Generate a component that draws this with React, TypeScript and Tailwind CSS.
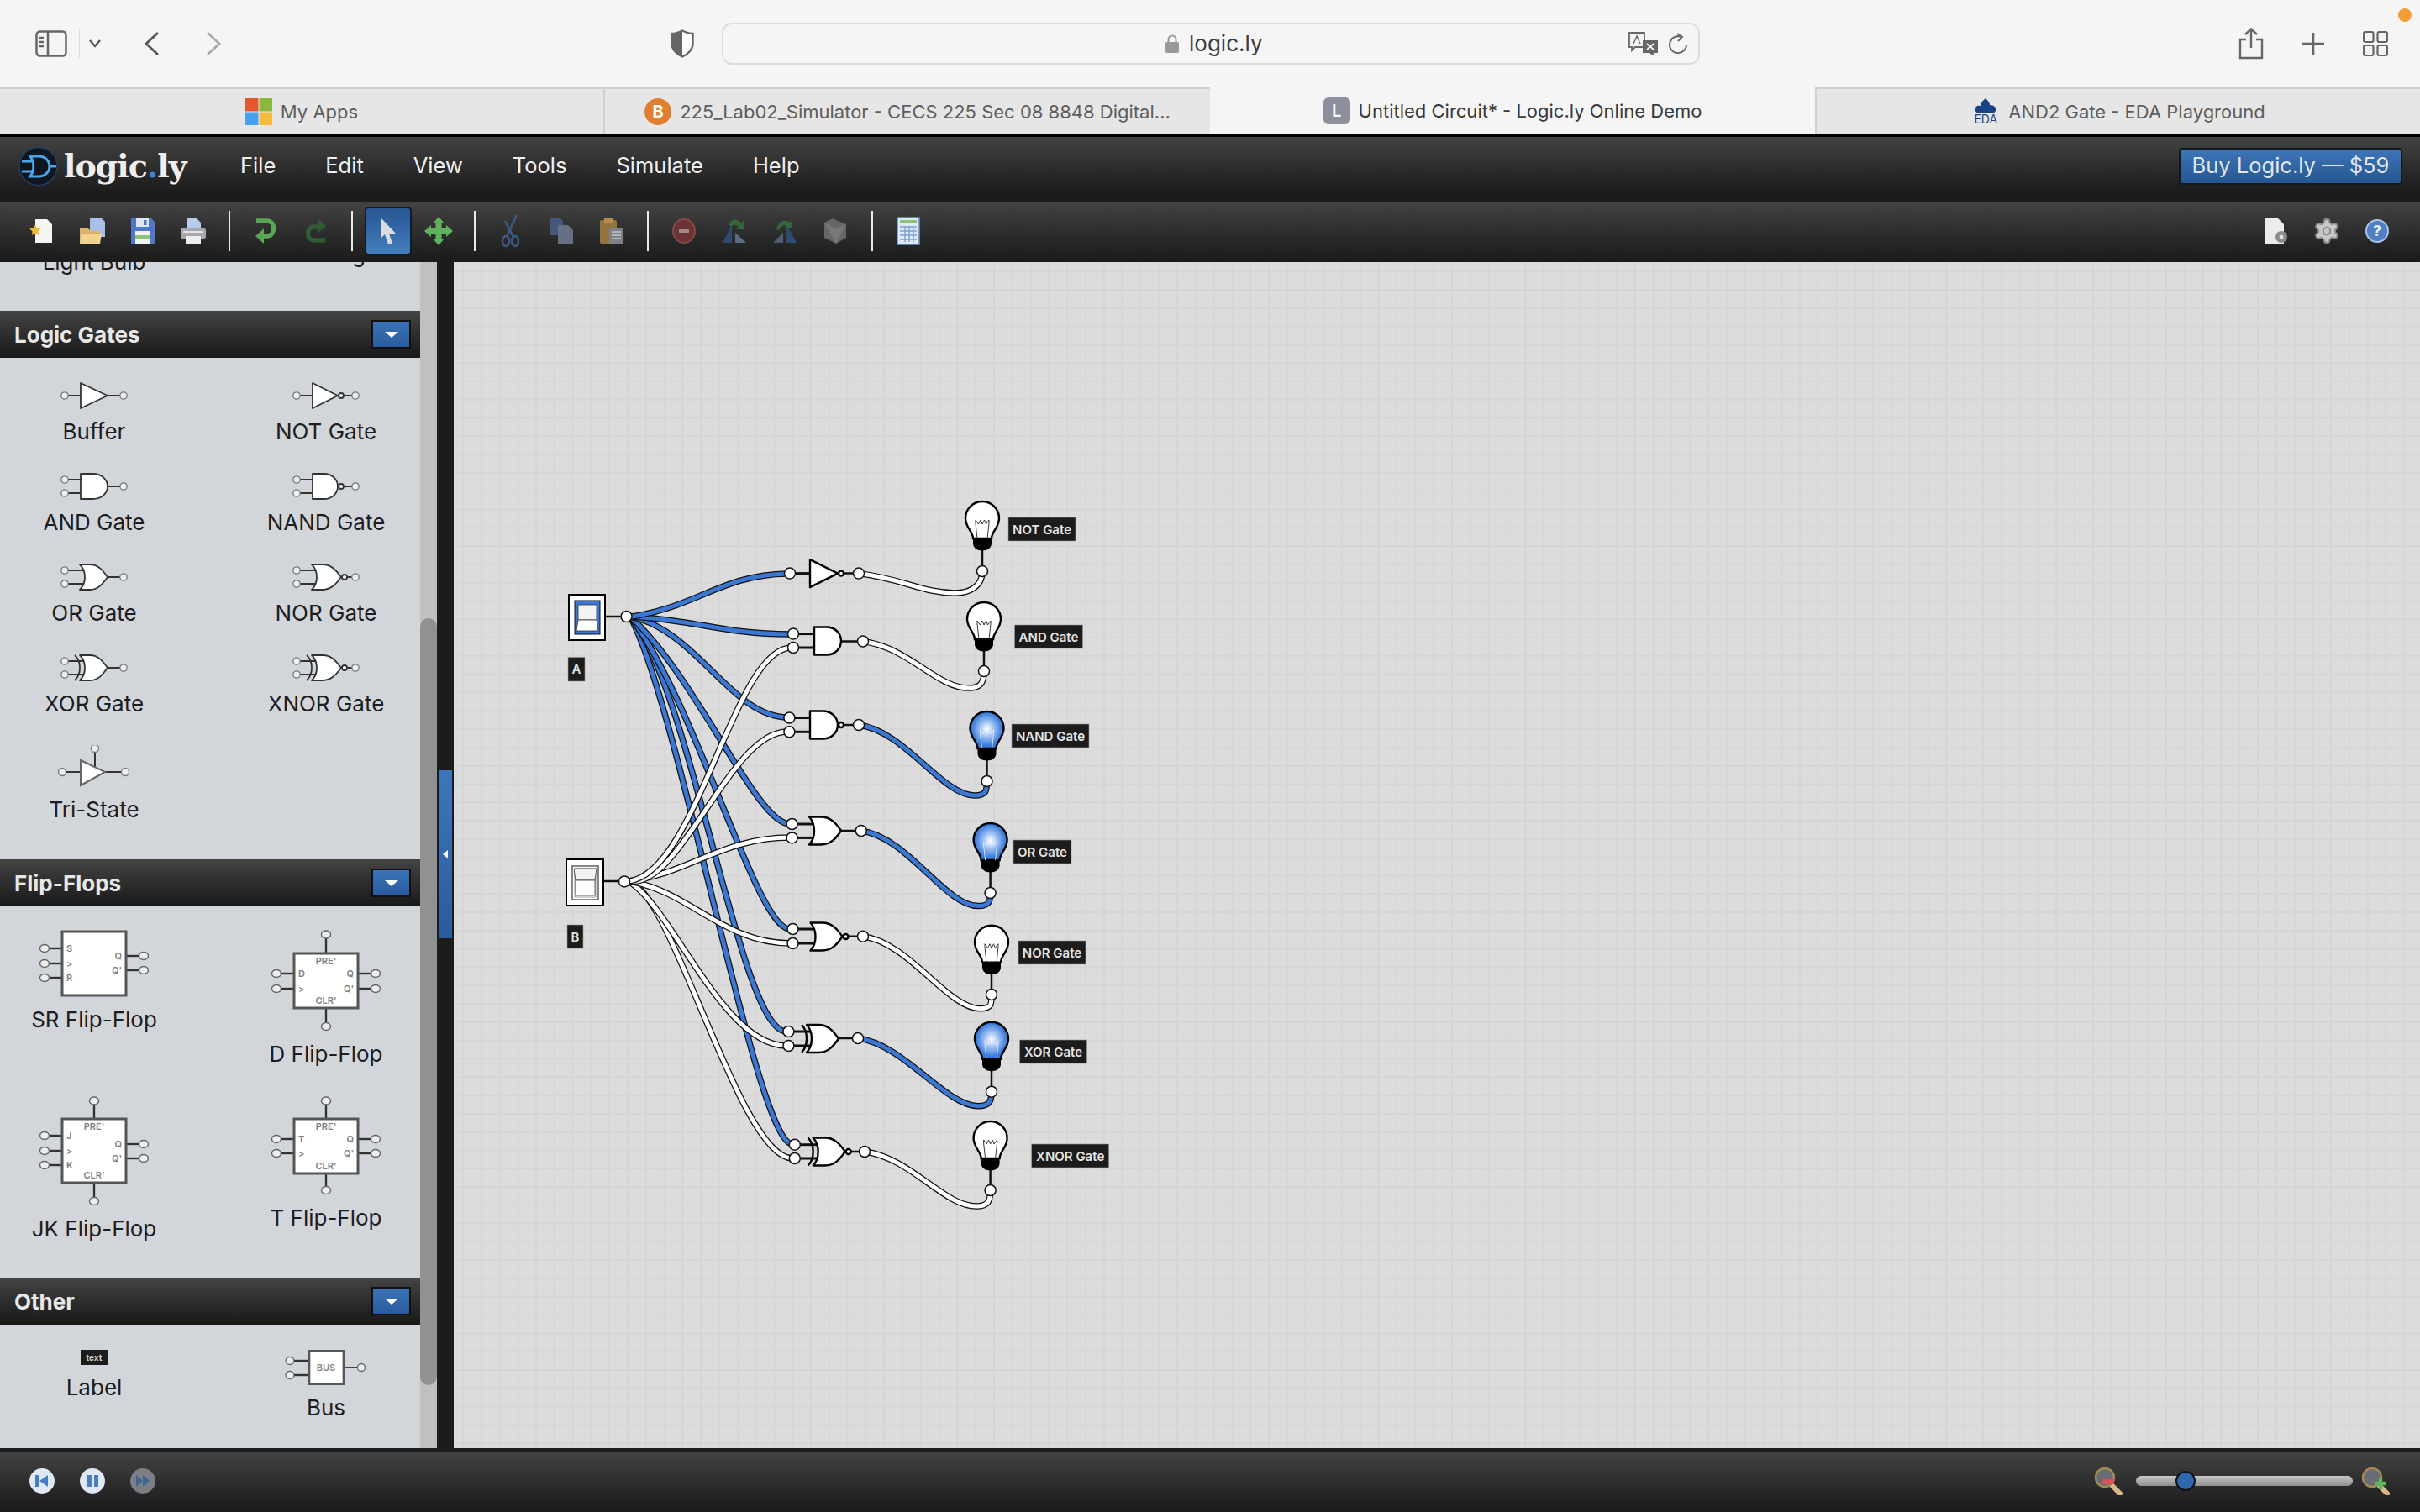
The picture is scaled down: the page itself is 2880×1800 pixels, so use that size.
import { Settings } from "lucide-react";
import type { ReactNode } from "react";

type Kind = "buf" | "not" | "and" | "nand" | "or" | "nor" | "xor" | "xnor";

const gridBg =
  "bg-[#dcdcdc] bg-[image:linear-gradient(#d5d5d5_2px,transparent_2px),linear-gradient(90deg,#d5d5d5_2px,transparent_2px)] bg-[size:21.8px_21.8px] bg-[position:-535px_-295px]";

function GateBody({ kind, x, cy, w, h, stroke, sw }: { kind: Kind; x: number; cy: number; w: number; h: number; stroke: string; sw: number }) {
  const top = cy - h / 2;
  const bot = cy + h / 2;
  const negated = kind === "not" || kind === "nand" || kind === "nor" || kind === "xnor";
  let d = "";
  let tip = x + w;
  if (kind === "buf" || kind === "not") {
    d = `M${x} ${top} L${x + w} ${cy} L${x} ${bot} Z`;
  } else if (kind === "and" || kind === "nand") {
    d = `M${x} ${top} H${x + w * 0.45} C${x + w * 0.8} ${top} ${x + w} ${cy - h * 0.25} ${x + w} ${cy} C${x + w} ${cy + h * 0.25} ${x + w * 0.8} ${bot} ${x + w * 0.45} ${bot} H${x} Z`;
  } else {
    tip = x + w + 4;
    d = `M${x - 1} ${top} H${x + w * 0.4} C${x + w * 0.75} ${top} ${x + w * 0.95} ${cy - h * 0.25} ${tip} ${cy} C${x + w * 0.95} ${cy + h * 0.25} ${x + w * 0.75} ${bot} ${x + w * 0.4} ${bot} H${x - 1} C${x + 7} ${cy + h * 0.25} ${x + 7} ${cy - h * 0.25} ${x - 1} ${top} Z`;
  }
  return (
    <g>
      {(kind === "xor" || kind === "xnor") && (
        <path d={`M${x - 7} ${top} C${x + 1} ${cy - h * 0.25} ${x + 1} ${cy + h * 0.25} ${x - 7} ${bot}`} fill="none" stroke={stroke} strokeWidth={sw} />
      )}
      <path d={d} fill="#fff" stroke={stroke} strokeWidth={sw} strokeLinejoin="round" />
      {negated && <circle cx={tip + 4} cy={cy} r={3} fill="#fff" stroke={stroke} strokeWidth={sw} />}
    </g>
  );
}

function SmallGate({ kind }: { kind: Kind }) {
  const single = kind === "buf" || kind === "not";
  const negated = kind === "not" || kind === "nand" || kind === "nor" || kind === "xnor";
  const isOr = kind === "or" || kind === "nor" || kind === "xor" || kind === "xnor";
  const w = negated ? 30 : isOr ? 28 : 32;
  return (
    <svg width="80" height="32" viewBox="-40 -16 80 32" className="shrink-0">
      <line x1={-31} x2={-12} y1={single ? 0 : -8} y2={single ? 0 : -8} stroke="#333" strokeWidth="2" />
      {!single && <line x1={-31} x2={-12} y1={8} y2={8} stroke="#333" strokeWidth="2" />}
      <line x1={0} x2={31} y1={0} y2={0} stroke="#333" strokeWidth="2" />
      <GateBody kind={kind} x={-16} cy={0} w={w} h={30} stroke="#333" sw={1.8} />
      <circle cx={-35} cy={single ? 0 : -8} r={4.2} fill="#eee" stroke="#777" strokeWidth="1.3" />
      {!single && <circle cx={-35} cy={8} r={4.2} fill="#eee" stroke="#777" strokeWidth="1.3" />}
      <circle cx={35} cy={0} r={4.2} fill="#eee" stroke="#777" strokeWidth="1.3" />
    </svg>
  );
}

function TriState() {
  return (
    <svg width="90" height="50" viewBox="-45 -4 90 50" className="shrink-0">
      <line x1={1} x2={1} y1={4} y2={22} stroke="#333" strokeWidth="2" />
      <line x1={-33} x2={36} y1={28} y2={28} stroke="#333" strokeWidth="2" />
      <path d="M-16 14 L13 28 L-16 44 Z" fill="#fff" stroke="#666" strokeWidth="2" />
      <circle cx={1} cy={0} r={4.5} fill="#eee" stroke="#777" strokeWidth="1.3" />
      <circle cx={-38} cy={28} r={4.5} fill="#eee" stroke="#777" strokeWidth="1.3" />
      <circle cx={37} cy={28} r={4.5} fill="#eee" stroke="#777" strokeWidth="1.3" />
    </svg>
  );
}

function FlipFlop(p: { h: number; by: number; bh: number; ins: [number, string][]; outs: [number, string][]; pre?: boolean }) {
  const small = { fontFamily: "Inter, sans-serif", fontSize: 11, fontWeight: 600, fill: "#808080" };
  return (
    <svg width="130" height={p.h} viewBox={`-65 0 130 ${p.h}`} className="shrink-0">
      {p.ins.map(([y]) => (
        <g key={y}>
          <line x1={-56} x2={-38} y1={y} y2={y} stroke="#333" strokeWidth="2.4" />
          <ellipse cx={-59} cy={y} rx={5.5} ry={4.5} fill="#eee" stroke="#666" strokeWidth="1.4" />
        </g>
      ))}
      {p.outs.map(([y]) => (
        <g key={y}>
          <line x1={38} x2={56} y1={y} y2={y} stroke="#333" strokeWidth="2.4" />
          <ellipse cx={59} cy={y} rx={5.5} ry={4.5} fill="#eee" stroke="#666" strokeWidth="1.4" />
        </g>
      ))}
      {p.pre && (
        <g>
          <line x1={0} x2={0} y1={10} y2={p.by} stroke="#333" strokeWidth="2.4" />
          <line x1={0} x2={0} y1={p.by + p.bh} y2={p.h - 10} stroke="#333" strokeWidth="2.4" />
          <ellipse cx={0} cy={6.5} rx={5.5} ry={4.5} fill="#eee" stroke="#666" strokeWidth="1.4" />
          <ellipse cx={0} cy={p.h - 6} rx={5.5} ry={4.5} fill="#eee" stroke="#666" strokeWidth="1.4" />
        </g>
      )}
      <rect x={-38} y={p.by} width={76} height={p.bh} fill="#fff" stroke="#555" strokeWidth="3" />
      {p.ins.map(([y, t]) => (
        <text key={y} x={-33} y={y + 4} {...small}>{t}</text>
      ))}
      {p.outs.map(([y, t]) => (
        <text key={y} x={33} y={y + 4} textAnchor="end" {...small}>{t}</text>
      ))}
      {p.pre && (
        <g>
          <text x={0} y={p.by + 13} textAnchor="middle" {...small}>PRE'</text>
          <text x={0} y={p.by + p.bh - 5} textAnchor="middle" {...small}>CLR'</text>
        </g>
      )}
    </svg>
  );
}

function LabelIcon() {
  return (
    <div className="flex h-[18px] w-[32px] items-center justify-center bg-[#1c1c1c] font-['Inter',sans-serif] text-[10px] font-bold leading-none text-[#ccc]">
      text
    </div>
  );
}

function BusIcon() {
  return (
    <svg width="100" height="42" viewBox="-50 0 100 42" className="shrink-0">
      <line x1={-39} x2={-20} y1={13} y2={13} stroke="#333" strokeWidth="2.4" />
      <line x1={-39} x2={-20} y1={30} y2={30} stroke="#333" strokeWidth="2.4" />
      <line x1={21} x2={38} y1={21} y2={21} stroke="#333" strokeWidth="1.8" />
      <rect x={-20} y={1} width={41} height={40} fill="#fff" stroke="#555" strokeWidth="2.6" />
      <text x={0} y={25} textAnchor="middle" fontFamily="Inter, sans-serif" fontSize="11" fontWeight="600" fill="#888">BUS</text>
      <ellipse cx={-43} cy={13} rx={5} ry={4.5} fill="#eee" stroke="#666" strokeWidth="1.3" />
      <ellipse cx={-43} cy={30} rx={5} ry={4.5} fill="#eee" stroke="#666" strokeWidth="1.3" />
      <circle cx={42} cy={21} r={4.5} fill="#eee" stroke="#666" strokeWidth="1.3" />
    </svg>
  );
}

function Item({ label, children }: { label: string; children: ReactNode }) {
  return (
    <div className="flex flex-col items-center gap-3">
      {children}
      <div className="text-[26px] leading-[30px] text-[#1d1d1f]">{label}</div>
    </div>
  );
}

function PanelHeader({ title }: { title: string }) {
  return (
    <div className="flex h-[56px] w-full shrink-0 items-center justify-between bg-linear-to-b from-[#444] to-[#191919] pl-[17px] pr-[11px]">
      <span className="text-[26px] font-bold text-[#e8e8e8]">{title}</span>
      <div className="flex h-[34px] w-[47px] items-center justify-center border-2 border-[#111] bg-linear-to-b from-[#3b73b8] to-[#2a5b9e]">
        <div className="h-0 w-0 border-x-[8px] border-t-[7px] border-x-transparent border-t-white" />
      </div>
    </div>
  );
}

function Sidebar() {
  return (
    <div className="flex w-[500px] flex-col overflow-hidden bg-[#d2d6db]">
      <div className="grid h-[58px] shrink-0 grid-cols-[220px_220px] justify-items-center gap-x-[56px] overflow-hidden pl-[2px]">
        <div className="-mt-[15px] h-[30px] text-[26px] leading-[30px] text-[#1d1d1f]">Light Bulb</div>
        <div className="-mt-[24px] h-[30px] text-[26px] leading-[30px] text-[#1d1d1f]">4-Bit Digit</div>
      </div>
      <PanelHeader title="Logic Gates" />
      <div className="grid grid-cols-[220px_220px] justify-items-center gap-x-[56px] gap-y-[34px] pb-[44px] pl-[2px] pt-[29px]">
        <Item label="Buffer"><SmallGate kind="buf" /></Item>
        <Item label="NOT Gate"><SmallGate kind="not" /></Item>
        <Item label="AND Gate"><SmallGate kind="and" /></Item>
        <Item label="NAND Gate"><SmallGate kind="nand" /></Item>
        <Item label="OR Gate"><SmallGate kind="or" /></Item>
        <Item label="NOR Gate"><SmallGate kind="nor" /></Item>
        <Item label="XOR Gate"><SmallGate kind="xor" /></Item>
        <Item label="XNOR Gate"><SmallGate kind="xnor" /></Item>
        <Item label="Tri-State"><TriState /></Item>
      </div>
      <PanelHeader title="Flip-Flops" />
      <div className="grid grid-cols-[220px_220px] justify-items-center gap-x-[56px] gap-y-[34px] pb-[43px] pl-[2px] pt-[27px]">
        <div className="self-start">
          <Item label="SR Flip-Flop">
            <FlipFlop h={81} by={3} bh={76} ins={[[23, "S"], [41, ">"], [58, "R"]]} outs={[[32, "Q"], [49, "Q'"]]} />
          </Item>
        </div>
        <Item label="D Flip-Flop">
          <FlipFlop h={122} by={29} bh={65} pre ins={[[53, "D"], [71, ">"]]} outs={[[53, "Q"], [71, "Q'"]]} />
        </Item>
        <div className="self-start">
          <Item label="JK Flip-Flop">
            <FlipFlop h={132} by={28} bh={76} pre ins={[[48, "J"], [66, ">"], [83, "K"]]} outs={[[58, "Q"], [75, "Q'"]]} />
          </Item>
        </div>
        <div className="self-start">
          <Item label="T Flip-Flop">
            <FlipFlop h={119} by={28} bh={65} pre ins={[[52, "T"], [69, ">"]]} outs={[[52, "Q"], [69, "Q'"]]} />
          </Item>
        </div>
      </div>
      <PanelHeader title="Other" />
      <div className="grid grid-cols-[220px_220px] justify-items-center gap-x-[56px] pl-[2px] pt-[30px]">
        <div className="self-start"><Item label="Label"><LabelIcon /></Item></div>
        <Item label="Bus"><BusIcon /></Item>
      </div>
    </div>
  );
}

const wire = (x0: number, y0: number, lx: number, ly: number, x1: number, y1: number) =>
  `M${x0} ${y0} C${x0 + 55} ${y0 + 7} ${lx - 45} ${ly} ${lx - 6} ${ly} C${lx + 8} ${ly} ${x1} ${ly - 6} ${x1} ${y1}`;

const BLUE = "#3a78d4";
const WHITE = "#ffffff";

const fanWires: [string, string][] = [
  ["M750 734 C810 846 900 1362 943 1362", BLUE],
  ["M750 734 C825 825 880 1228 936 1228", BLUE],
  ["M750 734 C830 840 900 1106 940 1106", BLUE],
  ["M750 734 C830 807 900 981 940 981", BLUE],
  ["M750 734 C830 750 870 854 938 854", BLUE],
  ["M750 734 C830 738 860 755 940 755", BLUE],
  ["M752 734 C830 722 860 684 937 683", BLUE],
  ["M748 1049 C800 1060 880 1379 943 1379", WHITE],
  ["M748 1049 C800 1080 860 1245 936 1245", WHITE],
  ["M748 1049 C820 1060 860 1123 941 1123", WHITE],
  ["M748 1049 C820 1040 860 997 940 997", WHITE],
  ["M748 1049 C810 1060 868 871 937 871", WHITE],
  ["M748 1049 C830 1040 873 771 942 771", WHITE],
];

const gates: { kind: Kind; x: number; cy: number; ins: [number, number][]; out: [number, number] }[] = [
  { kind: "not", x: 964, cy: 682.6, ins: [[940, 682.6]], out: [1022, 682.6] },
  { kind: "and", x: 969, cy: 763, ins: [[944, 754.6], [944, 771]], out: [1027, 763.5] },
  { kind: "nand", x: 964, cy: 863, ins: [[939.4, 854.5], [939.4, 871.3]], out: [1022, 863] },
  { kind: "or", x: 964, cy: 989, ins: [[942.6, 981], [942.6, 997.4]], out: [1024.8, 989] },
  { kind: "nor", x: 965.5, cy: 1115, ins: [[943.5, 1106], [943.5, 1123]], out: [1027, 1114.7] },
  { kind: "xor", x: 961, cy: 1236.5, ins: [[938.4, 1228], [938.4, 1245]], out: [1021, 1236] },
  { kind: "xnor", x: 968.7, cy: 1371, ins: [[945.8, 1362.7], [945.8, 1379]], out: [1029, 1371] },
];

const bulbs: { cx: number; top: number; node: number; lit: boolean; out: string; on: boolean; label: string; lx: number; ly: number; lw: number }[] = [
  { cx: 1169, top: 597, node: 680, lit: false, on: false, out: wire(1022, 682.6, 1143, 706, 1169, 680), label: "NOT Gate", lx: 1200, ly: 616, lw: 80 },
  { cx: 1171, top: 717, node: 799, lit: false, on: false, out: wire(1027, 763.5, 1159, 819, 1171, 799), label: "AND Gate", lx: 1207.5, ly: 744, lw: 81 },
  { cx: 1174.5, top: 847, node: 930, lit: true, on: true, out: wire(1022, 863, 1166, 947, 1174.5, 930), label: "NAND Gate", lx: 1204, ly: 862, lw: 92 },
  { cx: 1178.6, top: 980, node: 1063, lit: true, on: true, out: wire(1024.8, 989, 1170, 1078.6, 1178.6, 1063), label: "OR Gate", lx: 1206, ly: 1000, lw: 69 },
  { cx: 1180, top: 1101.7, node: 1184, lit: false, on: false, out: wire(1027, 1114.7, 1172.6, 1200.7, 1180, 1184), label: "NOR Gate", lx: 1212, ly: 1120, lw: 80 },
  { cx: 1180, top: 1216.7, node: 1299.7, lit: true, on: true, out: wire(1021, 1236, 1170, 1316.7, 1180, 1299.7), label: "XOR Gate", lx: 1213.5, ly: 1238, lw: 80 },
  { cx: 1178.6, top: 1335, node: 1417, lit: false, on: false, out: wire(1029, 1371, 1168, 1436, 1178.6, 1417), label: "XNOR Gate", lx: 1227.7, ly: 1362, lw: 92 },
];

function Wire({ d, color }: { d: string; color: string }) {
  return (
    <g fill="none" strokeLinecap="round">
      <path d={d} stroke="#111" strokeWidth="7.5" />
      <path d={d} stroke={color} strokeWidth="5" />
    </g>
  );
}

function Pin({ x, y }: { x: number; y: number }) {
  return <circle cx={x} cy={y} r={6.5} fill="#fff" stroke="#111" strokeWidth="1.5" />;
}

function CanvasLabel({ x, y, w, h, text }: { x: number; y: number; w: number; h: number; text: string }) {
  return (
    <g>
      <rect x={x} y={y} width={w} height={h} fill="#1c1c1c" stroke="#9a9a9a" strokeWidth="0.6" />
      <text x={x + w / 2} y={y + h / 2 + 5.5} textAnchor="middle" fontFamily="Inter, sans-serif" fontSize="15" fontWeight="600" fill="#e4e4e4">
        {text}
      </text>
    </g>
  );
}

function Bulb({ cx, top, node, lit }: { cx: number; top: number; node: number; lit: boolean }) {
  const filament = lit ? "#dfeaff" : "#222";
  return (
    <g transform={`translate(${cx} ${top})`}>
      <line x1={0} x2={0} y1={58} y2={node - top} stroke="#111" strokeWidth="2.5" />
      <path
        d="M-11 44 C-11 36 -20 31 -20 20 A20 20 0 0 1 20 20 C20 31 11 36 11 44 Z"
        fill={lit ? "url(#litBulb)" : "#fff"}
        stroke="#000"
        strokeWidth="2.4"
      />
      <path d="M-6 44 L-8 26 L-8 22 L-4.5 27 L-2 22 L0 27 L2.5 22 L4.5 27 L8 22 L8 26 L6 44" fill="none" stroke={filament} strokeWidth="0.9" />
      <path d="M-11 44 H11 V50 C11 55 6 58.5 0 58.5 C-6 58.5 -11 55 -11 50 Z" fill="#000" />
    </g>
  );
}

function SwitchPart({ on }: { on: boolean }) {
  return on ? (
    <g>
      <rect x={677} y={708} width={43} height={54} fill="#fff" stroke="#000" strokeWidth="2" />
      <rect x={684} y={715} width={30} height={40} fill={BLUE} stroke="#111" strokeWidth="1" />
      <rect x={688} y={720} width={22} height={18} fill="#f3f3f3" stroke="#333" strokeWidth="0.8" />
      <path d="M688 738 H710 L712 751 H686 Z" fill="#fff" stroke="#333" strokeWidth="0.8" />
    </g>
  ) : (
    <g>
      <rect x={674} y={1023} width={44} height={55} fill="#fff" stroke="#000" strokeWidth="2" />
      <rect x={681} y={1031} width={31} height={40} fill="#fff" stroke="#555" strokeWidth="1.4" />
      <rect x={684} y={1034} width={25} height={34} fill="#fff" stroke="#888" strokeWidth="0.8" />
      <path d="M683 1034 H710 L708 1048 H685 Z" fill="#f2f2f2" stroke="#333" strokeWidth="0.8" />
      <rect x={685} y={1048} width={23} height={18} fill="#fff" stroke="#333" strokeWidth="0.8" />
    </g>
  );
}

function Circuit() {
  return (
    <svg className="h-full w-full" viewBox="540 312 2340 1412">
      <defs>
        <radialGradient id="litBulb" cx="50%" cy="48%" r="62%">
          <stop offset="0%" stopColor="#ffffff" />
          <stop offset="30%" stopColor="#a9c8f4" />
          <stop offset="70%" stopColor="#3f7fdc" />
          <stop offset="100%" stopColor="#2f68c0" />
        </radialGradient>
      </defs>
      <line x1={720} x2={745} y1={734} y2={734} stroke="#111" strokeWidth="2.5" />
      <line x1={718} x2={743} y1={1049} y2={1049} stroke="#111" strokeWidth="2.5" />
      {fanWires.map(([d, color]) => (
        <Wire key={d} d={d} color={color} />
      ))}
      {bulbs.map((b) => (
        <Wire key={b.label} d={b.out} color={b.on ? BLUE : WHITE} />
      ))}
      <SwitchPart on />
      <SwitchPart on={false} />
      <Pin x={745.6} y={734} />
      <Pin x={743} y={1049.4} />
      <CanvasLabel x={676} y={782.5} w={20} h={28.5} text="A" />
      <CanvasLabel x={675} y={1101} w={19} h={28} text="B" />
      {gates.map((g) => (
        <g key={g.kind}>
          {g.ins.map(([x, y]) => (
            <line key={y} x1={x} x2={g.x + 4} y1={y} y2={y} stroke="#111" strokeWidth="3" />
          ))}
          <line x1={g.x + 25} x2={g.out[0]} y1={g.out[1]} y2={g.out[1]} stroke="#111" strokeWidth="2.5" />
          <GateBody kind={g.kind} x={g.x} cy={g.cy} w={g.kind === "and" ? 32 : 33} h={33} stroke="#000" sw={2.4} />
          {g.ins.map(([x, y]) => (
            <Pin key={y} x={x} y={y} />
          ))}
          <Pin x={g.out[0]} y={g.out[1]} />
        </g>
      ))}
      {bulbs.map((b) => (
        <g key={b.label}>
          <Bulb cx={b.cx} top={b.top} node={b.node} lit={b.lit} />
          <Pin x={b.cx} y={b.node} />
          <CanvasLabel x={b.lx} y={b.ly} w={b.lw} h={28} text={b.label} />
        </g>
      ))}
    </svg>
  );
}

function Tool({ children }: { children: ReactNode }) {
  return <div className="flex h-[72px] w-[60px] shrink-0 items-center justify-center">{children}</div>;
}

function Sep({ className }: { className: string }) {
  return <div className={`h-[48px] w-[2px] shrink-0 bg-[#e8e8e8] ${className}`} />;
}

function Toolbar() {
  return (
    <div className="flex h-[72px] shrink-0 items-center bg-linear-to-b from-[#434343] to-[#1a1a1a] pb-[3px] pl-[20px] pr-[21px]">
      <Tool>
        <svg width="32" height="32" viewBox="0 0 32 32"><path d="M8 2 H22 L28 8 V30 H8 Z" fill="#f4f4f0" /><path d="M7 12 l2.5 5 5.5 .8 -4 3.9 1 5.4 -5 -2.6 -5 2.6 1 -5.4 -4 -3.9 5.5 -.8Z" transform="translate(2 -2) scale(.85)" fill="#e8b93a" /></svg>
      </Tool>
      <Tool>
        <svg width="34" height="34" viewBox="0 0 34 34"><path d="M14 1 H27 L32 6 V24 H14 Z" fill="#a9bfe6" /><path d="M2 14 H12 L15 17 H26 V32 H2 Z" fill="#dcb268" /><path d="M4 20 H28 L26 32 H2 Z" fill="#f2d48f" /></svg>
      </Tool>
      <Tool>
        <svg width="32" height="32" viewBox="0 0 32 32"><path d="M2 1 H26 L30 5 V31 H2 Z" fill="#4f79c8" /><rect x="8" y="1" width="15" height="10" fill="#dfe6f4" /><rect x="17" y="3" width="3.5" height="6" fill="#4f79c8" /><rect x="7" y="16" width="18" height="15" fill="#eef3f6" /><rect x="7" y="21" width="18" height="5" fill="#8ec07a" /></svg>
      </Tool>
      <Tool>
        <svg width="32" height="32" viewBox="0 0 32 32"><path d="M8 1 H20 L25 6 V14 H8 Z" fill="#b9cbea" /><rect x="1" y="13" width="30" height="12" rx="2" fill="#a6a8ad" /><rect x="7" y="22" width="18" height="9" fill="#eee" /><rect x="4" y="16" width="24" height="2" fill="#e2e2e2" /></svg>
      </Tool>
      <Sep className="mx-[12px]" />
      <Tool>
        <svg width="32" height="34" viewBox="0 0 32 34"><path d="M5 5 H18 C28 5 28 23 18 23 H11" fill="none" stroke="#5aa657" strokeWidth="5.5" /><path d="M14 14 L4 23 L14 32 Z" fill="#5aa657" /></svg>
      </Tool>
      <Tool>
        <svg width="32" height="34" viewBox="0 0 32 34"><path d="M27 12 H14 C4 12 4 28 14 28 H27" fill="none" stroke="#315a35" strokeWidth="5.5" /><path d="M18 2 L28 11 L18 20 Z" fill="#315a35" /></svg>
      </Tool>
      <Sep className="ml-[12px] mr-[14px]" />
      <div className="flex h-[58px] w-[56px] shrink-0 items-center justify-center rounded-[5px] border-2 border-[#15181d] bg-linear-to-b from-[#275794] to-[#447dbd]">
        <svg width="22" height="34" viewBox="0 0 22 34"><path d="M2 1 L20 20 H12 L16 32 L11 33 L7 21 L2 26 Z" fill="#d8dde4" /></svg>
      </div>
      <div className="ml-[2px]">
        <Tool>
          <svg width="34" height="34" viewBox="0 0 34 34"><path d="M17 0 L24 8 H20.5 V13.5 H26 V10 L34 17 L26 24 V20.5 H20.5 V26 H24 L17 34 L10 26 H13.5 V20.5 H8 V24 L0 17 L8 10 V13.5 H13.5 V8 H10 Z" fill="#61b25f" /></svg>
        </Tool>
      </div>
      <Sep className="mx-[12px]" />
      <Tool>
        <svg width="24" height="40" viewBox="0 0 24 40" fill="none" stroke="#3c5a86" strokeWidth="2.6">
          <path d="M19 1 L7 27 M5 8 L15 27" />
          <ellipse cx="6" cy="32" rx="4" ry="6" />
          <ellipse cx="17" cy="32" rx="4" ry="6" />
        </svg>
      </Tool>
      <Tool>
        <svg width="32" height="34" viewBox="0 0 32 34"><path d="M2 1 H14 L18 5 V22 H2 Z" fill="#46587a" /><path d="M12 10 H24 L30 16 V33 H12 Z" fill="#667084" /></svg>
      </Tool>
      <Tool>
        <svg width="34" height="34" viewBox="0 0 34 34"><rect x="3" y="4" width="20" height="28" rx="2" fill="#95733c" /><rect x="8" y="1" width="10" height="6" fill="#b48d4e" /><rect x="14" y="14" width="17" height="19" fill="#7f8188" /><path d="M17 18 H28 M17 22 H28 M17 26 H28" stroke="#c8c8c8" strokeWidth="1.6" /></svg>
      </Tool>
      <Sep className="mx-[12px]" />
      <Tool>
        <svg width="30" height="32" viewBox="0 0 30 32"><ellipse cx="15" cy="16" rx="13" ry="14" fill="#6b3434" stroke="#854a4a" strokeWidth="2" /><rect x="9" y="14" width="12" height="4" fill="#a58a8a" /></svg>
      </Tool>
      <Tool>
        <svg width="32" height="32" viewBox="0 0 32 32"><path d="M2 30 L13 8 V30 Z" fill="#324a72" /><path d="M17 18 L30 30 H17 Z" fill="#5d6a80" /><path d="M9 8 C14 1 20 1 24 7 L27 4 V14 H18 L21 11 C18 8 15 8 12 11 Z" fill="#356642" /></svg>
      </Tool>
      <Tool>
        <svg width="32" height="32" viewBox="0 0 32 32"><path d="M2 30 L14 18 V30 Z" fill="#505d72" /><path d="M18 8 V30 H30 Z" fill="#324a72" /><path d="M6 14 C8 5 16 1 22 6 L25 3 V13 H15 L18 10 C15 8 11 10 9 15 Z" fill="#356642" /></svg>
      </Tool>
      <Tool>
        <svg width="34" height="32" viewBox="0 0 34 32"><path d="M4 6 L14 1 L22 5 L30 8 V24 L18 31 L4 24 Z" fill="#666" /><path d="M4 6 L18 13 L30 8 L18 31 Z" fill="#777" /></svg>
      </Tool>
      <Sep className="ml-[13px] mr-[12px]" />
      <Tool>
        <svg width="28" height="34" viewBox="0 0 28 34"><rect x="1" y="1" width="26" height="32" fill="#dfe8f6" stroke="#6a8fca" strokeWidth="1.6" /><rect x="4" y="4" width="20" height="4" fill="#8fc07a" /><path d="M4 12 H24 M4 17 H24 M4 22 H24 M4 27 H24 M10 11 V30 M15 11 V30 M20 11 V30" stroke="#7f9fd4" strokeWidth="1.4" /></svg>
      </Tool>
      <div className="ml-auto flex">
        <Tool>
          <svg width="30" height="32" viewBox="0 0 30 32"><path d="M1 1 H17 L24 8 V31 H1 Z" fill="#ececec" /><circle cx="21" cy="23" r="7" fill="#8a8a8a" /><circle cx="21" cy="23" r="2.5" fill="#ddd" /></svg>
        </Tool>
        <Tool>
          <Settings size={34} fill="#c8c8c8" className="text-[#8a8a8a]" strokeWidth={1.5} />
        </Tool>
        <Tool>
          <div className="flex h-[28px] w-[28px] items-center justify-center rounded-full border-2 border-[#a9c2e6] bg-[#4f7fc4] text-[18px] font-bold leading-none text-[#e6eefa]">?</div>
        </Tool>
      </div>
    </div>
  );
}

function AppHeader() {
  return (
    <div className="flex h-[69px] shrink-0 items-center bg-linear-to-b from-[#434343] to-[#1a1a1a] pl-[22px] pr-[21px]">
      <svg width="47" height="46" viewBox="0 0 47 46" className="shrink-0">
        <circle cx="23.5" cy="23" r="22.5" fill="#10161f" stroke="#1f3e63" strokeWidth="1.5" />
        <path d="M14 11 H24 C32 11 37 17 37 23 C37 29 32 35 24 35 H14 C19 28 19 18 14 11 Z" fill="none" stroke="#4aa8ea" strokeWidth="3" />
        <path d="M4 17 H16 M4 29 H16 M37 23 H45" stroke="#4aa8ea" strokeWidth="3" />
      </svg>
      <div className="ml-[7px] w-[150px] shrink-0 whitespace-nowrap font-['DejaVu_Serif',serif] text-[38px] font-bold leading-none tracking-[-1px] text-[#eeeeee]">
        logic<span className="text-[#3d85d8]">.</span>ly
      </div>
      <nav className="ml-[60px] flex gap-[59px] text-[25.5px] text-[#f0f0f0]">
        <span>File</span>
        <span>Edit</span>
        <span>View</span>
        <span>Tools</span>
        <span>Simulate</span>
        <span>Help</span>
      </nav>
      <div className="ml-auto flex h-[44px] w-[266px] items-center justify-center rounded-[4px] border-2 border-[#15181d] bg-linear-to-b from-[#3e76ba] to-[#25568f] text-[25.5px] text-[#e2e6ea]">
        Buy Logic.ly — $59
      </div>
    </div>
  );
}

function BrowserBar() {
  return (
    <div className="relative flex h-[104px] shrink-0 items-center bg-[#f5f5f5]">
      <div className="ml-[42px] flex items-center">
        <svg width="38" height="32" viewBox="0 0 38 32" fill="none" stroke="#666" strokeWidth="2.5">
          <rect x="1.5" y="1.5" width="35" height="29" rx="4" />
          <path d="M15 2 V30" />
          <path d="M5 9 H10 M5 14 H10 M5 19 H10" />
        </svg>
        <div className="ml-[14px] h-[34px] w-[1px] bg-[#dcdcdc]" />
        <svg width="14" height="10" viewBox="0 0 14 10" className="ml-[11px]" fill="none" stroke="#555" strokeWidth="2.4"><path d="M1 1 L7 8 L13 1" /></svg>
      </div>
      <svg width="20" height="30" viewBox="0 0 20 30" className="ml-[51px]" fill="none" stroke="#555" strokeWidth="2.8"><path d="M17 2 L3 15 L17 28" /></svg>
      <svg width="20" height="30" viewBox="0 0 20 30" className="ml-[53px]" fill="none" stroke="#aaa" strokeWidth="2.8"><path d="M3 2 L17 15 L3 28" /></svg>
      <svg width="28" height="34" viewBox="0 0 28 34" className="ml-[534px]">
        <path d="M14 1.5 C19 4 23 5 26.5 5 V17 C26.5 24 20 30 14 32.5 C8 30 1.5 24 1.5 17 V5 C5 5 9 4 14 1.5 Z" fill="#fff" stroke="#666" strokeWidth="2.4" />
        <path d="M14 1.5 C9 4 5 5 1.5 5 V17 C1.5 24 8 30 14 32.5 Z" fill="#666" />
      </svg>
      <div className="ml-[33px] flex h-[50px] w-[1164px] items-center rounded-[12px] border-2 border-[#dddddd] bg-[#f5f5f5] pr-[12px]">
        <div className="ml-[526px] flex items-center gap-[12px]">
          <svg width="16" height="22" viewBox="0 0 16 22"><path d="M3.5 10 V6 a4.5 4.5 0 0 1 9 0 V10" fill="none" stroke="#999" strokeWidth="2" /><rect x="0" y="9" width="16" height="13" rx="2" fill="#999" /></svg>
          <span className="text-[26px] leading-none text-[#3c3c3c]">logic.ly</span>
        </div>
        <div className="ml-auto flex items-center gap-[10px]">
          <svg width="38" height="28" viewBox="0 0 38 28">
            <path d="M2 1 H20 V18 H9 L5 22 V18 H2 Z" fill="#f5f5f5" stroke="#666" strokeWidth="1.8" />
            <path d="M18 10 H36 V25 H31 V29 L26 25 H18 Z" fill="#666" />
            <path d="M23 14 L31 21 M31 14 L23 21" stroke="#f5f5f5" strokeWidth="1.8" />
            <path d="M7 14 L11 5 L15 14" fill="none" stroke="#666" strokeWidth="1.4" />
          </svg>
          <svg width="24" height="26" viewBox="0 0 24 26" fill="none" stroke="#666" strokeWidth="2"><path d="M16 5 A10 10 0 1 0 22 14" /><path d="M11 1 L17 5 L12 10" /></svg>
        </div>
      </div>
      <svg width="32" height="38" viewBox="0 0 32 38" className="ml-[640px]" fill="none" stroke="#666" strokeWidth="2.4">
        <path d="M10 14 H3 V36 H29 V14 H22" />
        <path d="M16 24 V2 M9 8 L16 1.5 L23 8" />
      </svg>
      <svg width="28" height="28" viewBox="0 0 28 28" className="ml-[44px]" stroke="#666" strokeWidth="2.6"><path d="M14 1 V27 M1 14 H27" /></svg>
      <svg width="30" height="30" viewBox="0 0 30 30" className="ml-[45px]" fill="none" stroke="#666" strokeWidth="2.2">
        <rect x="1" y="1" width="11.5" height="12" rx="2" />
        <rect x="17.5" y="1" width="11.5" height="12" rx="2" />
        <rect x="1" y="17" width="11.5" height="12" rx="2" />
        <rect x="17.5" y="17" width="11.5" height="12" rx="2" />
      </svg>
      <div className="absolute right-[10px] top-[10px] h-[16px] w-[16px] rounded-full bg-[#f29c38]" />
    </div>
  );
}

function TabBar() {
  return (
    <div className="flex h-[56px] shrink-0 text-[22px]">
      <div className="flex w-[720px] items-center justify-center gap-[10px] border-r-2 border-t-2 border-[#cfcfcf] bg-[#e6e6e6] text-[#5e5e5e]">
        <svg width="32" height="32" viewBox="0 0 32 32"><rect width="15.5" height="15.5" fill="#e5572f" /><rect x="16.5" width="15.5" height="15.5" fill="#8cb63c" /><rect y="16.5" width="15.5" height="15.5" fill="#46a0ee" /><rect x="16.5" y="16.5" width="15.5" height="15.5" fill="#f6bb3d" /></svg>
        My Apps
      </div>
      <div className="flex w-[720px] items-center justify-center gap-[10px] border-t-2 border-[#cfcfcf] bg-[#e6e6e6] text-[#5e5e5e]">
        <div className="flex h-[32px] w-[32px] items-center justify-center rounded-full bg-[#e07f2f] text-[20px] font-bold text-white">B</div>
        225_Lab02_Simulator - CECS 225 Sec 08 8848 Digital...
      </div>
      <div className="flex w-[720px] items-center justify-center gap-[10px] bg-[#f5f5f5] text-[#3a3a3a]">
        <div className="flex h-[32px] w-[32px] items-center justify-center rounded-[6px] bg-[#8d8f9c] text-[20px] font-semibold text-white">L</div>
        Untitled Circuit* - Logic.ly Online Demo
      </div>
      <div className="flex w-[720px] items-center justify-center gap-[10px] border-l-2 border-t-2 border-[#cfcfcf] bg-[#e6e6e6] text-[#5e5e5e]">
        <div className="flex h-[32px] w-[34px] flex-col items-center justify-end leading-none">
          <svg width="26" height="18" viewBox="0 0 26 18"><path d="M13 0 C17 4 18 6 18 8 C23 8 26 11 25 14 C25 16 23 18 20 18 H6 C2 18 0 15 1 12 C1 9 4 8 7 9 C7 5 10 3 13 0 Z" fill="#1a4384" /></svg>
          <span className="text-[14px] leading-[14px] text-[#1a4384]">EDA</span>
        </div>
        AND2 Gate - EDA Playground
      </div>
    </div>
  );
}

function Magnifier({ plus }: { plus: boolean }) {
  return (
    <svg width="34" height="34" viewBox="0 0 34 34" className="shrink-0">
      <path d="M21 22 L31 32" stroke="#d9b98c" strokeWidth="6" strokeLinecap="round" />
      <circle cx="13" cy="13" r="11" fill="#676c75" stroke="#a48856" strokeWidth="2.5" />
      {plus ? (
        <path d="M16 20 H30 M23 13 V27" stroke="#5fb45a" strokeWidth="4.5" />
      ) : (
        <rect x="10" y="15" width="14" height="6" fill="#d9525a" />
      )}
    </svg>
  );
}

function BottomBar() {
  return (
    <div className="flex h-[72px] shrink-0 items-center bg-linear-to-b from-[#434343] to-[#1a1a1a] pb-[2px] pl-[35px] pr-[36px]">
      <div className="flex h-[30px] w-[30px] items-center justify-center rounded-full bg-[#dfe8f5]">
        <svg width="16" height="14" viewBox="0 0 16 14" fill="#4a7cc4"><rect width="4" height="14" /><path d="M15 0 V14 L5 7 Z" /></svg>
      </div>
      <div className="ml-[30px] flex h-[30px] w-[30px] items-center justify-center gap-[3px] rounded-full bg-[#dfe8f5]">
        <div className="h-[14px] w-[5px] bg-[#4a7cc4]" />
        <div className="h-[14px] w-[5px] bg-[#4a7cc4]" />
      </div>
      <div className="ml-[30px] flex h-[30px] w-[30px] items-center justify-center rounded-full bg-[#7b7e84]">
        <svg width="16" height="14" viewBox="0 0 16 14" fill="#41638f"><path d="M0 0 L8 7 L0 14 Z M8 0 L16 7 L8 14 Z" /></svg>
      </div>
      <div className="ml-auto flex items-center">
        <Magnifier plus={false} />
        <div className="relative ml-[16px] mr-[10px] h-[12px] w-[258px] rounded-full bg-linear-to-b from-[#c8c8c8] to-[#8f8f8f]">
          <div className="absolute left-[47px] top-[-6px] h-[24px] w-[24px] rounded-full border-2 border-[#111] bg-[#2f68b0]" />
        </div>
        <Magnifier plus />
      </div>
    </div>
  );
}

export default function App() {
  return (
    <div className="flex h-[1800px] w-[2880px] flex-col overflow-hidden bg-[#1c1c1c] font-['Inter',sans-serif]">
      <BrowserBar />
      <TabBar />
      <div className="h-[3px] shrink-0 bg-black" />
      <AppHeader />
      <div className="h-[8px] shrink-0 bg-[#1c1c1c]" />
      <Toolbar />
      <div className="flex h-[1412px] shrink-0">
        <Sidebar />
        <div className="flex w-[20px] shrink-0 flex-col bg-[#c0c0c0]">
          <div className="mt-[424px] h-[913px] rounded-full bg-[#919191]" />
        </div>
        <div className="flex w-[20px] shrink-0 flex-col items-center bg-[#1c1c1c]">
          <div className="mt-[605px] flex h-[200px] w-[16px] items-center justify-center bg-linear-to-b from-[#3e76ba] to-[#2a5b9e]">
            <div className="h-0 w-0 border-y-[5px] border-r-[6px] border-y-transparent border-r-white" />
          </div>
        </div>
        <div className={`min-w-0 flex-1 ${gridBg}`}>
          <Circuit />
        </div>
      </div>
      <div className="h-[4px] shrink-0 bg-[#1c1c1c]" />
      <BottomBar />
    </div>
  );
}
